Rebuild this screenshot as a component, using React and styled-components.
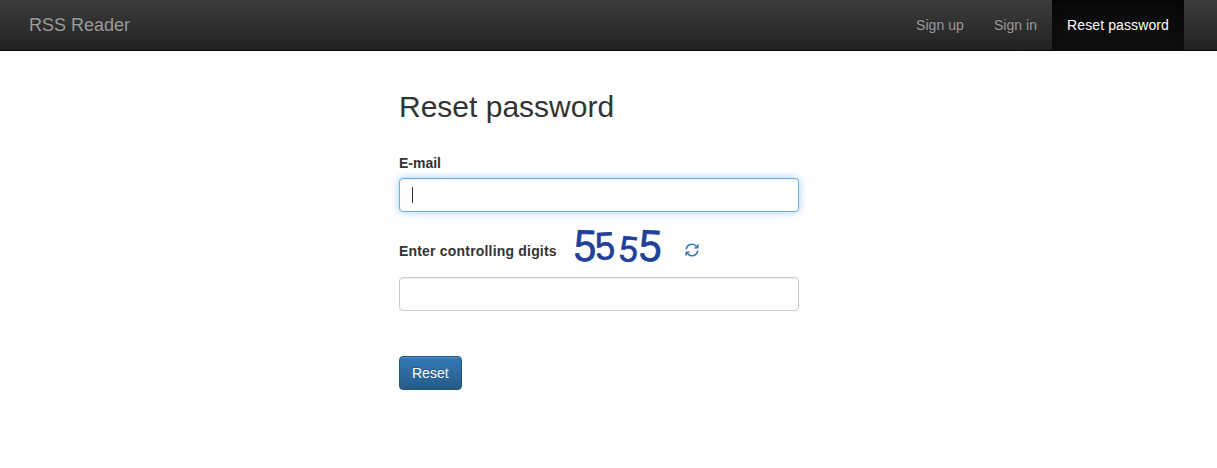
import React from 'react';
import styled, { createGlobalStyle, css } from 'styled-components';

const GlobalStyle = createGlobalStyle`
  *, *::before, *::after { box-sizing: border-box; }
  body {
    margin: 0;
    background: #fff;
    color: #333;
    font: 14px/20px Arial, "Liberation Sans", sans-serif;
  }
`;

const Navbar = styled.nav`
  display: flex;
  justify-content: space-between;
  height: 51px;
  padding: 0 33px 0 14px;
  border-bottom: 1px solid #080808;
  background: linear-gradient(to bottom, #3c3c3c 0%, #222 100%);
`;

const Brand = styled.a`
  padding: 15px;
  color: #9d9d9d;
  font-size: 18px;
  text-shadow: 0 -1px 0 rgba(0, 0, 0, 0.25);
`;

const NavList = styled.div`
  display: flex;
`;

const NavLink = styled.a`
  padding: 15px;
  color: #9d9d9d;
  letter-spacing: 0.05px;
  text-shadow: 0 -1px 0 rgba(0, 0, 0, 0.25);
  ${({ $active }) => $active && css`
    color: #fff;
    letter-spacing: 0.11px;
    background: linear-gradient(to bottom, #080808 0%, #0f0f0f 100%);
    box-shadow: inset 0 3px 9px rgba(0, 0, 0, 0.25);
  `}
`;

const Form = styled.form`
  width: 400px;
  margin: 39px 0 0 399px;
`;

const Title = styled.h1`
  margin: 0 0 30px;
  font-size: 30px;
  font-weight: 400;
  line-height: 33px;
`;

const Label = styled.label`
  display: block;
  font-weight: 700;
`;

const Field = styled.div`
  display: flex;
  align-items: center;
  height: 34px;
  margin-top: 5px;
  padding: 0 12px;
  border: 1px solid ${({ $focused }) => ($focused ? '#66afe9' : '#ccc')};
  border-radius: 4px;
  background: #fff;
  box-shadow: inset 0 1px 1px rgba(0, 0, 0, 0.075)
    ${({ $focused }) => $focused && ', 0 0 8px rgba(102, 175, 233, 0.6)'};
`;

const Caret = styled.span`
  width: 1px;
  height: 16px;
  background: #333;
`;

const CaptchaRow = styled.div`
  display: flex;
  align-items: flex-start;
  height: 50px;
  margin-top: 10px;
`;

const CaptchaLabel = styled(Label)`
  margin-top: 19px;
  letter-spacing: 0.19px;
  white-space: nowrap;
`;

const Captcha = styled.svg`
  flex: none;
  width: 100px;
  height: 50px;
  margin-left: auto;
  overflow: visible;
`;

const Refresh = styled.svg`
  flex: none;
  width: 14px;
  height: 14px;
  margin: 21px 100px 0 18px;
`;

const Button = styled.button`
  height: 34px;
  margin-top: 45px;
  padding: 0 12px;
  border: 1px solid #245580;
  border-radius: 4px;
  background: linear-gradient(to bottom, #337ab7 0%, #265a88 100%);
  box-shadow: inset 0 1px 0 rgba(255, 255, 255, 0.15), 0 1px 1px rgba(0, 0, 0, 0.075);
  color: #fff;
  font: inherit;
  text-shadow: 0 -1px 0 rgba(0, 0, 0, 0.2);
`;

const digits = [
  { x: 17.6, y: 39, size: 44.5, angle: 3, squeeze: 0.91 },
  { x: 38.7, y: 37.5, size: 39, angle: -3, squeeze: 0.92 },
  { x: 60.6, y: 39.5, size: 36, angle: 6, squeeze: 0.94 },
  { x: 82.7, y: 39, size: 44.5, angle: 3, squeeze: 0.93 },
];

function CaptchaImage() {
  return (
    <Captcha viewBox="0 0 100 50">
      {digits.map((d, i) => (
        <text
          key={i}
          transform={`translate(${d.x} ${d.y}) rotate(${d.angle}) scale(${d.squeeze} 1)`}
          fontFamily='"Liberation Sans", sans-serif'
          fontSize={d.size}
          textAnchor="middle"
          fill="#20409a"
          stroke="#20409a"
          strokeWidth="0.7"
        >
          5
        </text>
      ))}
    </Captcha>
  );
}

export default function App() {
  return (
    <>
      <GlobalStyle />
      <Navbar>
        <Brand>RSS Reader</Brand>
        <NavList>
          <NavLink>Sign up</NavLink>
          <NavLink>Sign in</NavLink>
          <NavLink $active>Reset password</NavLink>
        </NavList>
      </Navbar>
      <Form>
        <Title>Reset password</Title>
        <Label>E-mail</Label>
        <Field $focused><Caret /></Field>
        <CaptchaRow>
          <CaptchaLabel>Enter controlling digits</CaptchaLabel>
          <CaptchaImage />
          <Refresh viewBox="0 0 14 14" aria-label="Refresh">
            <path d="M1.2 6.3A5.8 5.8 0 0 1 11 2.9M12.8 7.7A5.8 5.8 0 0 1 3 11.1" fill="none" stroke="#3f7cb4" strokeWidth="1.6" />
            <path d="M13.6 0.6V5.6H8.6ZM0.4 13.4V8.4H5.4Z" fill="#3f7cb4" />
          </Refresh>
        </CaptchaRow>
        <Field />
        <Button type="button">Reset</Button>
      </Form>
    </>
  );
}
